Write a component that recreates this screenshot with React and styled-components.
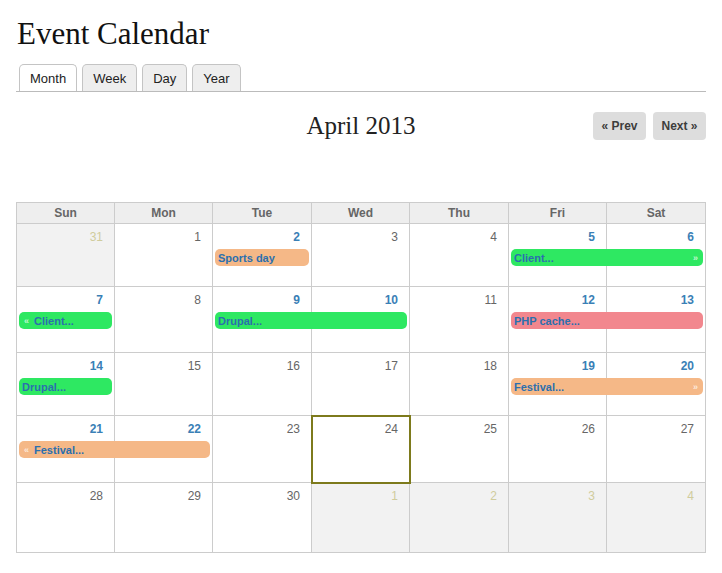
import styled, { createGlobalStyle } from 'styled-components';

const GlobalStyle = createGlobalStyle`
  body {
    margin: 8px;
    background: #fff;
    font-family: "Liberation Sans", Arial, sans-serif;
  }
`;

const eventColors = {
  green: '#2ee862',
  orange: '#f5b887',
  red: '#f2878e',
};

// column widths incl. right border, as in the screenshot
const columns = '98px 98px 99px 98px 99px 98px 99px';

// each week: row height, days and event bars (col is 1-based)
const weeks = [
  {
    height: 63,
    days: [{ n: 31, other: true }, { n: 1 }, { n: 2, busy: true }, { n: 3 }, { n: 4 }, { n: 5, busy: true }, { n: 6, busy: true }],
    events: [
      { col: 3, span: 1, label: 'Sports day', color: 'orange' },
      { col: 6, span: 2, label: 'Client...', color: 'green', more: true },
    ],
  },
  {
    height: 66,
    days: [{ n: 7, busy: true }, { n: 8 }, { n: 9, busy: true }, { n: 10, busy: true }, { n: 11 }, { n: 12, busy: true }, { n: 13, busy: true }],
    events: [
      { col: 1, span: 1, label: 'Client...', color: 'green', cont: true },
      { col: 3, span: 2, label: 'Drupal...', color: 'green' },
      { col: 6, span: 2, label: 'PHP cache...', color: 'red' },
    ],
  },
  {
    height: 63,
    days: [{ n: 14, busy: true }, { n: 15 }, { n: 16 }, { n: 17 }, { n: 18 }, { n: 19, busy: true }, { n: 20, busy: true }],
    events: [
      { col: 1, span: 1, label: 'Drupal...', color: 'green' },
      { col: 6, span: 2, label: 'Festival...', color: 'orange', more: true },
    ],
  },
  {
    height: 67,
    days: [{ n: 21, busy: true }, { n: 22, busy: true }, { n: 23 }, { n: 24, today: true }, { n: 25 }, { n: 26 }, { n: 27 }],
    events: [{ col: 1, span: 2, label: 'Festival...', color: 'orange', cont: true }],
  },
  {
    height: 70,
    days: [{ n: 28 }, { n: 29 }, { n: 30 }, { n: 1, other: true }, { n: 2, other: true }, { n: 3, other: true }, { n: 4, other: true }],
    events: [],
  },
];

const dayNames = ['Sun', 'Mon', 'Tue', 'Wed', 'Thu', 'Fri', 'Sat'];
const tabs = ['Month', 'Week', 'Day', 'Year'];

const App = () => {
  return (
    <Page>
      <GlobalStyle />
      <Title>Event Calendar</Title>
      <TabBar>
        {tabs.map((t, i) => (
          <Tab key={t} $active={i === 0}>{t}</Tab>
        ))}
      </TabBar>
      <NavRow>
        <MonthTitle>April 2013</MonthTitle>
        <Pager>
          <PagerButton>« Prev</PagerButton>
          <PagerButton>Next »</PagerButton>
        </Pager>
      </NavRow>
      <Calendar>
        <HeadRow>
          {dayNames.map((d) => (
            <HeadCell key={d}>{d}</HeadCell>
          ))}
        </HeadRow>
        {weeks.map((w, wi) => (
          <Week key={wi} $height={w.height}>
            {w.days.map((d, di) => (
              <DayCell key={di} $col={di + 1} $other={d.other} $today={d.today}>
                <DayNumber $busy={d.busy} $other={d.other}>{d.n}</DayNumber>
              </DayCell>
            ))}
            {w.events.map((e, ei) => (
              <EventBar key={ei} $col={e.col} $span={e.span} $color={eventColors[e.color]}>
                {e.cont && <Arrow>«</Arrow>}
                <EventLabel>{e.label}</EventLabel>
                {e.more && <Arrow $right>»</Arrow>}
              </EventBar>
            ))}
          </Week>
        ))}
      </Calendar>
    </Page>
  );
};

export default App;

const Page = styled.div`
  padding: 8px 8px 0;
  width: 690px;
`;

const Title = styled.h1`
  margin: 0;
  font-family: "Liberation Serif", "Times New Roman", serif;
  font-weight: normal;
  font-size: 31px;
  line-height: 36px;
  color: #111;
  padding-left: 1px;
`;

const TabBar = styled.div`
  display: flex;
  gap: 5px;
  margin-top: 12px;
  padding-left: 3px;
  border-bottom: 1px solid #bbb;
`;

const Tab = styled.div`
  height: 26px;
  padding: 0 10px;
  display: flex;
  align-items: center;
  font-size: 13px;
  color: #222;
  background: ${(p) => (p.$active ? '#fff' : '#eee')};
  border: 1px solid #c4c4c4;
  border-bottom: none;
  border-radius: 5px 5px 0 0;
`;

const NavRow = styled.div`
  position: relative;
  display: flex;
  justify-content: center;
  align-items: center;
  height: 28px;
  margin-top: 20px;
`;

const MonthTitle = styled.h2`
  margin: 0;
  font-family: "Liberation Serif", "Times New Roman", serif;
  font-weight: normal;
  font-size: 25px;
  color: #222;
`;

const Pager = styled.div`
  position: absolute;
  right: 0;
  top: 0;
  display: flex;
  gap: 7px;
`;

const PagerButton = styled.div`
  width: 53px;
  height: 28px;
  display: flex;
  align-items: center;
  justify-content: center;
  background: #ddd;
  border-radius: 4px;
  font-size: 12px;
  font-weight: bold;
  color: #3d3d3d;
`;

const Calendar = styled.div`
  margin-top: 62px;
  border-top: 1px solid #ccc;
  border-left: 1px solid #ccc;
`;

const HeadRow = styled.div`
  display: grid;
  grid-template-columns: ${columns};
  background: #eee;
`;

const HeadCell = styled.div`
  height: 20px;
  line-height: 20px;
  text-align: center;
  font-size: 12px;
  font-weight: bold;
  color: #666;
  border-right: 1px solid #ccc;
  border-bottom: 1px solid #ccc;
`;

const Week = styled.div`
  display: grid;
  grid-template-columns: ${columns};
  grid-template-rows: 25px 17px 1fr;
  height: ${(p) => p.$height}px;
`;

const DayCell = styled.div`
  grid-column: ${(p) => p.$col};
  grid-row: 1 / -1;
  border-right: 1px solid #ccc;
  border-bottom: 1px solid #ccc;
  background: ${(p) => (p.$other ? '#f2f2f2' : '#fff')};
  text-align: right;
  padding: 3px 11px 0 0;
  ${(p) =>
    p.$today &&
    `
    position: relative;
    z-index: 1;
    outline: 2px solid #7d7a1c;
    outline-offset: -1px;
  `}
`;

const DayNumber = styled.span`
  font-size: 12px;
  line-height: 14px;
  font-weight: ${(p) => (p.$busy ? 'bold' : 'normal')};
  color: ${(p) => (p.$other ? '#d0cc9d' : p.$busy ? '#3a80b6' : '#666')};
`;

const EventBar = styled.div`
  grid-column: ${(p) => p.$col} / span ${(p) => p.$span};
  grid-row: 2;
  z-index: 2;
  margin: 0 3px 0 2px;
  display: flex;
  align-items: center;
  padding: 0 5px 0 3px;
  background: ${(p) => p.$color};
  border-radius: 5px;
  font-size: 11px;
  font-weight: bold;
  color: #2b6fae;
  white-space: nowrap;
`;

const EventLabel = styled.span`
  flex: 1;
`;

const Arrow = styled.span`
  color: rgba(255, 255, 255, 0.7);
  font-size: 9px;
  margin: ${(p) => (p.$right ? '0 0 0 4px' : '0 5px 0 2px')};
`;
